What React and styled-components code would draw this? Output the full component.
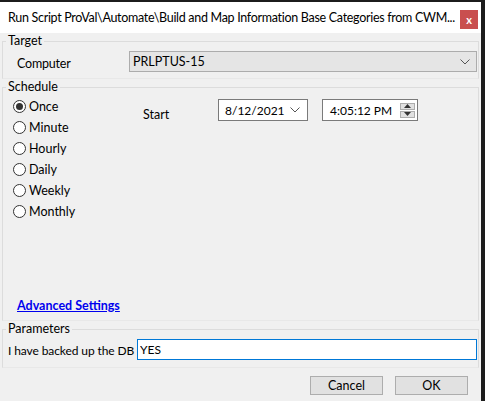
import React from "react";
import styled, { createGlobalStyle } from "styled-components";

const GlobalStyle = createGlobalStyle`
  html, body {
    margin: 0;
    padding: 0;
    background: #1c1c1c;
  }
  body {
    padding-top: 2px;
    font-family: Lato, "Noto Sans", sans-serif;
    font-size: 12px;
    color: #000;
  }
`;

const schedules = ["Once", "Minute", "Hourly", "Daily", "Weekly", "Monthly"];

const Chevron = () => (
  <svg width="10" height="6" viewBox="0 0 10 6">
    <path d="M0.5 0.5 L5 5 L9.5 0.5" fill="none" stroke="#555" strokeWidth="1" />
  </svg>
);

const App = () => {
  return (
    <>
      <GlobalStyle />
      <Window>
        <TitleBar>
          <Title>Run Script ProVal\Automate\Build and Map Information Base Categories from CWM...</Title>
          <CloseButton>x</CloseButton>
        </TitleBar>
        <Content>
          <Group $height={46}>
            <Legend>Target</Legend>
            <FieldRow>
              <FieldLabel>Computer</FieldLabel>
              <Combo>
                <span>PRLPTUS-15</span>
                <Chevron />
              </Combo>
            </FieldRow>
          </Group>

          <Group $height={242}>
            <Legend>Schedule</Legend>
            <ScheduleBody>
              <RadioList>
                {schedules.map((s, i) => (
                  <RadioRow key={s}>
                    <RadioCircle $checked={i === 0} />
                    {s}
                  </RadioRow>
                ))}
              </RadioList>
              <StartRow>
                <StartLabel>Start</StartLabel>
                <DateBox>
                  <span>8/12/2021</span>
                  <Chevron />
                </DateBox>
                <TimeBox>
                  <span>4:05:12 PM</span>
                  <Spinner>
                    <SpinButton>
                      <svg width="7" height="4" viewBox="0 0 7 4"><path d="M0 4 L3.5 0 L7 4 Z" fill="#333" /></svg>
                    </SpinButton>
                    <SpinButton>
                      <svg width="7" height="4" viewBox="0 0 7 4"><path d="M0 0 L3.5 4 L7 0 Z" fill="#333" /></svg>
                    </SpinButton>
                  </Spinner>
                </TimeBox>
              </StartRow>
            </ScheduleBody>
            <AdvancedLink href="#">Advanced Settings</AdvancedLink>
          </Group>

          <Group $height={47}>
            <Legend>Parameters</Legend>
            <ParamRow>
              <ParamLabel>I have backed up the DB</ParamLabel>
              <TextInput defaultValue="YES" />
            </ParamRow>
          </Group>

          <Footer>
            <Button>Cancel</Button>
            <Button>OK</Button>
          </Footer>
        </Content>
      </Window>
    </>
  );
};

export default App;

const Window = styled.div`
  width: 481px;
  height: 399px;
  background: #f0f0f0;
  display: flex;
  flex-direction: column;
  overflow: hidden;
`;

const TitleBar = styled.div`
  flex-shrink: 0;
  height: 31px;
  box-sizing: border-box;
  background: #fff;
  display: flex;
  align-items: center;
  justify-content: space-between;
  padding: 0 3px 0 8px;
`;

const Title = styled.div`
  font-size: 12.5px;
  letter-spacing: -0.3px;
  white-space: nowrap;
  color: #000;
`;

const CloseButton = styled.div`
  flex-shrink: 0;
  width: 18px;
  height: 19px;
  background: #c94f4f;
  color: #fff;
  font-size: 11px;
  font-weight: 700;
  display: flex;
  align-items: center;
  justify-content: center;
  margin-top: 3px;
`;

const Content = styled.div`
  flex: 1;
  display: flex;
  flex-direction: column;
  padding: 0 2px;
`;

const Group = styled.fieldset`
  flex-shrink: 0;
  margin: 0;
  padding: 2px 0 0 0;
  min-width: 0;
  border: 1px solid #dcdcdc;
  border-bottom-color: #e8e8e8;
  box-sizing: border-box;
  height: ${(p) => p.$height}px;
`;

const Legend = styled.legend`
  padding: 0 2px;
  margin-left: 3px;
  line-height: 16px;
  font-size: 12.5px;
`;

const FieldRow = styled.div`
  display: flex;
  align-items: center;
  padding-left: 14px;
`;

const FieldLabel = styled.div`
  width: 112px;
  padding-top: 3px;
  font-size: 12.5px;
  letter-spacing: -0.2px;
`;

const Combo = styled.div`
  width: 348px;
  height: 21px;
  box-sizing: border-box;
  background: #e5e5e5;
  border: 1px solid #acacac;
  display: flex;
  align-items: center;
  justify-content: space-between;
  padding: 0 6px 0 3px;
  font-size: 12.5px;
`;

const ScheduleBody = styled.div`
  display: flex;
  height: 202px;
  padding-left: 10px;
  margin-top: -1px;
  font-size: 12.5px;
`;

const RadioList = styled.div`
  display: flex;
  flex-direction: column;
  width: 130px;
`;

const RadioRow = styled.label`
  height: 21px;
  display: flex;
  align-items: center;
  gap: 3px;
`;

const RadioCircle = styled.span`
  width: 11px;
  height: 11px;
  border: 1px solid #333;
  border-radius: 50%;
  background: #fff;
  display: flex;
  align-items: center;
  justify-content: center;
  &::after {
    content: "";
    width: 7px;
    height: 7px;
    border-radius: 50%;
    background: ${(p) => (p.$checked ? "#333" : "transparent")};
  }
`;

const StartRow = styled.div`
  display: flex;
  align-items: flex-start;
  padding-top: 3px;
`;

const StartLabel = styled.div`
  width: 75px;
  padding-top: 8px;
`;

const DateBox = styled.div`
  width: 90px;
  height: 22px;
  box-sizing: border-box;
  background: #fff;
  border: 1px solid #7a7a7a;
  display: flex;
  align-items: center;
  justify-content: space-between;
  padding: 0 7px 0 6px;
  font-size: 12px;
`;

const TimeBox = styled(DateBox)`
  width: 96px;
  margin-left: 14px;
  padding: 0 2px 0 7px;
`;

const Spinner = styled.div`
  display: flex;
  flex-direction: column;
  gap: 1px;
`;

const SpinButton = styled.div`
  width: 15px;
  height: 7px;
  background: #e1e1e1;
  border: 1px solid #adadad;
  box-sizing: border-box;
  display: flex;
  align-items: center;
  justify-content: center;
`;

const AdvancedLink = styled.a`
  display: inline-block;
  margin-left: 14px;
  color: #0000ee;
  font-weight: 700;
  font-size: 12.5px;
  text-decoration: underline;
`;

const ParamRow = styled.div`
  display: flex;
  align-items: center;
  padding-left: 5px;
  font-size: 12.5px;
`;

const ParamLabel = styled.div`
  width: 129px;
  white-space: nowrap;
  padding-top: 2px;
  font-size: 12px;
  letter-spacing: -0.1px;
`;

const TextInput = styled.input`
  width: 340px;
  height: 21px;
  box-sizing: border-box;
  border: 1px solid #0078d7;
  outline: none;
  padding: 0 2px;
  font-family: inherit;
  font-size: 12px;
  background: #fff;
`;

const Footer = styled.div`
  display: flex;
  justify-content: flex-end;
  gap: 12px;
  padding: 8px 11px 0 0;
`;

const Button = styled.button`
  width: 73px;
  height: 19px;
  background: #e1e1e1;
  border: 1px solid #adadad;
  font-family: inherit;
  font-size: 12.5px;
  padding: 0;
  color: #000;
`;
